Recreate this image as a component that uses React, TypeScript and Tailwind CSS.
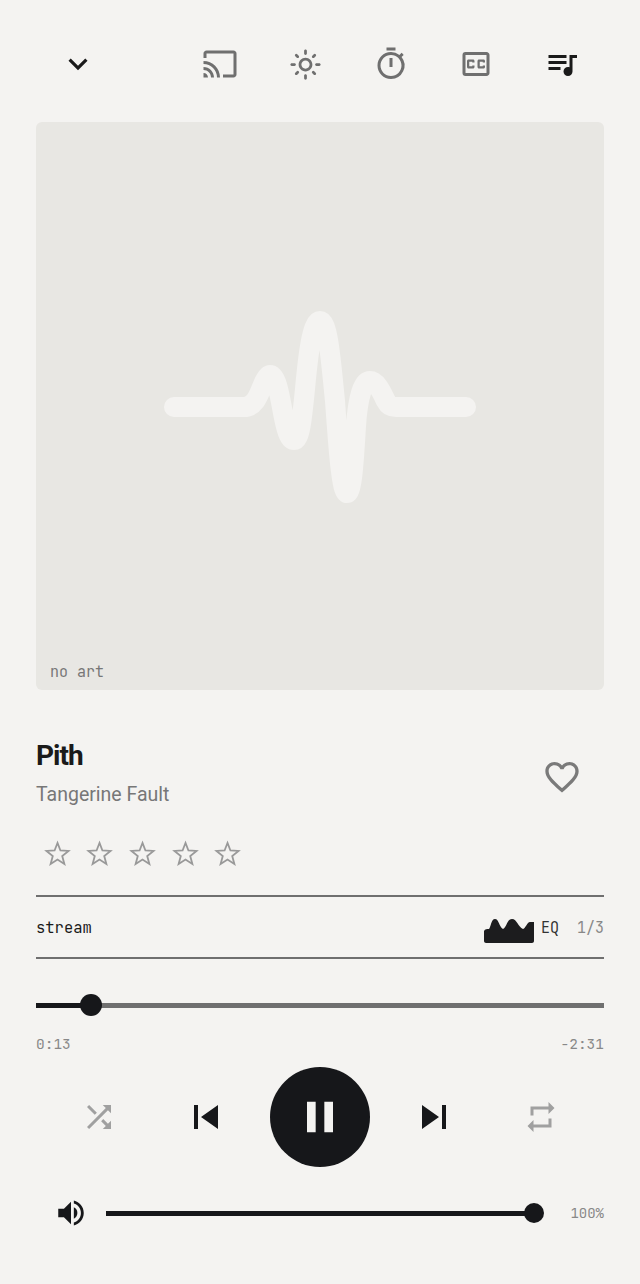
import React from "react";
import {
  MdCast,
  MdOutlineTimer,
  MdOutlineClosedCaption,
  MdQueueMusic,
  MdSkipPrevious,
  MdSkipNext,
  MdPause,
  MdShuffle,
  MdRepeat,
  MdVolumeUp,
  MdFavoriteBorder,
  MdKeyboardArrowDown,
  MdOutlineLightMode,
} from "react-icons/md";

const mono = "font-['JetBrains_Mono','DejaVu_Sans_Mono','Liberation_Mono',monospace]";

function Star() {
  return (
    <svg width="27" height="27" viewBox="0 0 24 24" fill="none" stroke="#999999" strokeWidth="1.6" strokeLinejoin="miter">
      <path d="M12 2.6 L14.6 9.3 L21.8 9.7 L16.2 14.3 L18.1 21.3 L12 17.4 L5.9 21.3 L7.8 14.3 L2.2 9.7 L9.4 9.3 Z" />
    </svg>
  );
}

function Wave() {
  return (
    <svg width="340" height="210" viewBox="0 0 340 210" fill="none" stroke="#f4f3f1" strokeWidth="20" strokeLinecap="round" strokeLinejoin="round">
      <path d="M24 106 H94 C104 106 108 96 112 86 C115 78 118 74 120 74 C126 74 129 90 133 112 C136 128 139 139 144 139 C150 139 152 118 155 88 C158 55 162 20 170 20 C178 20 181 60 185 100 C188 140 191 192 197 192 C202 192 204 160 206 125 C208 95 213 80 220 80 C227 80 232 92 236 100 C238 104 240 106 246 106 H316" />
    </svg>
  );
}

function Eq() {
  return (
    <svg width="50" height="24" viewBox="0 0 50 24" fill="#1c1c1e" className="translate-y-[3px]">
      <path d="M0 22 V12 C1 10 3 10 5 10 C7 8 7 0 11 0 C15 0 15 8 19 10 C23 8 23 0 28 0 C33 0 34 8 39 10 C42 9 43 3 46 3 L50 3 V22 C50 23 49 24 48 24 H2 C1 24 0 23 0 22 Z" />
    </svg>
  );
}

export default function App() {
  return (
    <div className="w-[640px] h-[1284px] bg-[#f4f3f1] px-9 font-['Roboto',sans-serif] overflow-hidden">
      <header className="h-[122px] flex items-center justify-between pt-[6px]">
        <div className="w-[84px] flex justify-center text-[#1a1a1a]">
          <MdKeyboardArrowDown size={38} />
        </div>
        <div className="flex items-center text-[#6f6f6f] mr-[-0.5px]">
          <div className="w-[85.5px] flex justify-center"><MdCast size={36} /></div>
          <div className="w-[85.5px] flex justify-center"><MdOutlineLightMode size={33} /></div>
          <div className="w-[85.5px] flex justify-center"><MdOutlineTimer size={36} /></div>
          <div className="w-[85.5px] flex justify-center"><MdOutlineClosedCaption size={36} /></div>
          <div className="w-[85.5px] flex justify-center text-[#1a1a1a]"><MdQueueMusic size={36} /></div>
        </div>
      </header>

      <div className="relative w-[568px] h-[568px] bg-[#e8e7e3] rounded-md flex items-center justify-center">
        <Wave />
        <span className={`absolute left-[14px] bottom-[7px] text-[15px] text-[#777777] ${mono}`}>no art</span>
      </div>

      <div className="flex items-center justify-between mt-[48px]">
        <div>
          <div className="text-[28px] leading-[36px] font-bold text-[#1a1a1a] tracking-[-1px]">Pith</div>
          <div className="text-[19.5px] leading-[28px] text-[#777777] mt-[7px]">Tangerine Fault</div>
        </div>
        <div className="w-[84px] flex justify-center text-[#7a7a7a] mt-[7px]">
          <MdFavoriteBorder size={40} />
        </div>
      </div>

      <div className="flex items-center gap-[15.7px] mt-[22px] pl-[7.5px] h-[44px]">
        <Star /><Star /><Star /><Star /><Star />
      </div>

      <div className="mt-[20px] h-[64px] border-y-2 border-[#6f6f6f] flex items-center justify-between pt-[2px]">
        <span className={`text-[15.5px] text-[#1a1a1a] ${mono}`}>stream</span>
        <div className="flex items-center">
          <Eq />
          <span className={`ml-[7px] text-[15px] text-[#333333] ${mono}`}>EQ</span>
          <span className={`ml-[18px] text-[15px] text-[#888888] ${mono}`}>1/3</span>
        </div>
      </div>

      <div className="relative h-[5px] mt-[44px] bg-[#6f6f6f]">
        <div className="h-full w-[55px] bg-[#16171a]" />
        <div className="absolute left-[44px] top-[-9px] w-[22px] h-[22px] rounded-full bg-[#16171a]" />
      </div>

      <div className={`flex justify-between mt-[26px] text-[14.5px] leading-[20px] text-[#888888] ${mono}`}>
        <span>0:13</span>
        <span>-2:31</span>
      </div>

      <div className="flex items-center justify-center mt-[13px]">
        <MdShuffle size={36} className="text-[#a0a0a0]" />
        <MdSkipPrevious size={48} className="text-[#16171a] ml-[65px]" />
        <div className="w-[100px] h-[100px] rounded-full bg-[#16171a] flex items-center justify-center mx-[40px]">
          <MdPause size={52} className="text-[#f4f3f1]" />
        </div>
        <MdSkipNext size={48} className="text-[#16171a] mr-[65px]" />
        <MdRepeat size={36} className="text-[#a0a0a0]" />
      </div>

      <div className="flex items-center mt-[19px] h-[54px]">
        <div className="w-[70px] flex justify-center"><MdVolumeUp size={34} className="text-[#16171a]" /></div>
        <div className="relative w-[428px] h-[5px] bg-[#16171a]">
          <div className="absolute right-[-10px] top-[-8px] w-[20px] h-[20px] rounded-full bg-[#16171a]" />
        </div>
        <span className={`ml-auto text-[14px] text-[#888888] ${mono}`}>100%</span>
      </div>
    </div>
  );
}
